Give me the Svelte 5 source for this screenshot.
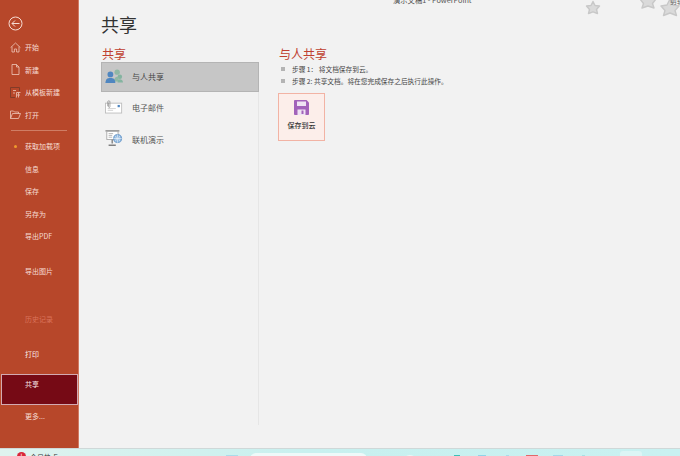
<script>
    const group1 = [
        {label: '开始', icon: 'home'},
        {label: '新建', icon: 'doc'},
        {label: '从模板新建', icon: 'tpl'},
        {label: '打开', icon: 'open'}
    ]
    const group2 = [
        {label: '获取加载项', dot: true},
        {label: '信息'},
        {label: '保存'},
        {label: '另存为'},
        {label: '导出PDF'}
    ]
    const taskDots = [
        {color: '#3cc0b8', width: 6, left: 454},
        {color: '#8fd4e8', width: 8, left: 478},
        {color: '#a8dcea', width: 3, left: 506},
        {color: '#e2686a', width: 12, left: 526},
        {color: '#a3d8e8', width: 10, left: 553},
        {color: '#a8e0e4', width: 3, left: 582}
    ]
</script>

<div class="window">
    <div class="body">
        <aside class="side">
            <button class="back" aria-label="返回">
                <svg width="15" height="15" viewBox="0 0 15 15" fill="none" stroke="#f6dcd3" stroke-width="1">
                    <circle cx="7.5" cy="7.5" r="6.5" />
                    <path d="M11.5 7.5H4M7 4.5L4 7.5L7 10.5" />
                </svg>
            </button>

            <nav class="group top">
                {#each group1 as item}
                    <div class="item">
                        <span class="ico">
                            {#if item.icon === 'home'}
                                <svg width="11" height="11" viewBox="0 0 11 11" fill="none" stroke="#efc8ba" stroke-width=".8">
                                    <path d="M.6 5.6L5.5 1L10.4 5.6M2 4.6V10H4.4V7H6.6V10H9V4.6" />
                                </svg>
                            {:else if item.icon === 'doc'}
                                <svg width="9" height="11" viewBox="0 0 9 11" fill="none" stroke="#efc8ba" stroke-width=".8">
                                    <path d="M1 .5H5.5L8 3V10.5H1ZM5.5 .5V3H8" />
                                </svg>
                            {:else if item.icon === 'tpl'}
                                <svg width="11" height="11" viewBox="0 0 11 11" fill="none" stroke="#7c3a28" stroke-width=".9">
                                    <path d="M.5 .5H9.5V4M.5 .5V10.5H5" />
                                    <path d="M3 3.5H6M3 6H5M6.5 5.5V10.5M6.5 5.5H10.5M6.5 8H10M8.5 5.5V10.5" stroke="#e6b8a8" />
                                </svg>
                            {:else}
                                <svg width="11" height="9" viewBox="0 0 11 9" fill="none" stroke="#efc8ba" stroke-width=".8">
                                    <path d="M.5 8.5V1H3.5L4.5 2H8.5V3.5M.5 8.5H8.5L10.5 3.5H2.5Z" />
                                </svg>
                            {/if}
                        </span>
                        <span>{item.label}</span>
                    </div>
                {/each}
            </nav>

            <div class="rule"></div>

            <nav class="group">
                {#each group2 as item}
                    <div class="item">
                        <span class="ico">{#if item.dot}<i class="dot"></i>{/if}</span>
                        <span>{item.label}</span>
                    </div>
                {/each}
            </nav>

            <div class="item export"><span class="ico"></span><span>导出图片</span></div>
            <div class="item history"><span class="ico"></span><span>历史记录</span></div>
            <div class="item print"><span class="ico"></span><span>打印</span></div>
            <div class="item current"><span class="ico"></span><span>共享</span></div>
            <div class="item more"><span class="ico"></span><span>更多...</span></div>
        </aside>

        <main class="main">
            <div class="doc-title">演示文稿1 - PowerPoint</div>

            <svg class="stars" width="100" height="24" viewBox="0 0 100 24" aria-hidden="true">
                <g fill="#dadada" stroke="#c8c8c8" stroke-width="1.4" stroke-linejoin="round">
                    <path d="M9 1.500L11 5.500L15.500 6L12.500 9.500L13.500 13.500L9 11.800L4.500 13.500L5.500 9.500L2.500 6L7 5.500Z" />
                    <path d="M64-8L67-2L72-1L68.500 3.500L70 8L64 6L58 8L59.500 3.500L56-1L61-2Z" />
                    <path d="M86-1L89 5L95 6L91 10.500L92.500 15.500L86 13L79.500 15.500L81 10.500L77 6L83 5Z" />
                </g>
            </svg>
            <div class="corner-text">剪辑</div>

            <h1>共享</h1>

            <div class="columns">
                <section class="left">
                    <h2>共享</h2>
                    <div class="list">
                        <div class="row selected">
                            <svg viewBox="0 0 20 16">
                                <circle cx="13.500" cy="3.500" r="3" fill="#8fb8a4" />
                                <circle cx="16.500" cy="8.500" r="2.500" fill="#84b4a0" />
                                <path d="M10 14C10 10 12 8.500 14 8.500S15 12 15 14Z" fill="#8fb8a4" />
                                <path d="M14 15C14 12.500 15 11.500 16.500 11.500S20 12.500 20 15Z" fill="#84b4a0" />
                                <circle cx="6" cy="6" r="3.200" fill="#4f86c0" />
                                <path d="M.5 15.500C.5 11.500 2.500 10 6 10S11.500 11.500 11.500 15.500Z" fill="#4f86c0" />
                            </svg>
                            <span>与人共享</span>
                        </div>
                        <div class="row">
                            <svg viewBox="0 0 20 16" fill="none">
                                <rect x=".5" y="3.500" width="18" height="11" fill="#fff" stroke="#bdbdbd" />
                                <rect x="14" y="5.500" width="2.500" height="2.500" fill="#4f86c0" />
                                <path d="M3 9.500H12M3 11.500H9" stroke="#cfcfcf" />
                                <path d="M3 7V2C3 .5 5.500 .5 5.500 2V7.500C5.500 8.500 4 8.500 4 7.500V3" stroke="#8a8a8a" stroke-width=".8" />
                            </svg>
                            <span>电子邮件</span>
                        </div>
                        <div class="row">
                            <svg viewBox="0 0 20 19" fill="none">
                                <path d="M.500 1H16" stroke="#707070" stroke-width="1.200" />
                                <rect x="2" y="1.500" width="12.500" height="9" fill="#fff" stroke="#a8a8a8" />
                                <path d="M4 4H9M4 6H8M4 8H8" stroke="#b0b0b0" />
                                <path d="M8 10.500V15M4 17H12" stroke="#808080" stroke-width="1.500" />
                                <circle cx="14" cy="9.500" r="4.500" fill="#8db6de" stroke="#4f86c0" stroke-width=".7" />
                                <path d="M9.500 9.500H18.500M14 5V14M11.500 6.500C13 8.500 13 10.500 11.500 12.500M16.500 6.500C15 8.500 15 10.500 16.500 12.500" stroke="#fff" stroke-width=".6" />
                            </svg>
                            <span>联机演示</span>
                        </div>
                    </div>
                </section>

                <section class="right">
                    <h2>与人共享</h2>
                    <ul class="steps">
                        <li>步骤 1： 将文档保存到云。</li>
                        <li>步骤 2: 共享文档。将在您完成保存之后执行此操作。</li>
                    </ul>
                    <button class="save">
                        <svg width="15" height="15" viewBox="0 0 15 15">
                            <path d="M0 1C0 .5.500 0 1 0H12.500L15 2.500V14C15 14.500 14.500 15 14 15H1C.5 15 0 14.500 0 14Z" fill="#a263ba" />
                            <rect x="3" y="1.500" width="9" height="4.500" fill="#efe4f3" />
                            <rect x="3.500" y="9.500" width="8" height="5.500" fill="#efe4f3" />
                            <rect x="7.500" y="10.500" width="2" height="3.500" fill="#a263ba" />
                        </svg>
                        <span>保存到云</span>
                    </button>
                </section>
            </div>
        </main>
    </div>

    <footer class="taskbar">
        <i class="alert">!</i>
        <span class="news">今日热点</span>
        <i class="mark"></i>
        <i class="search"></i>
        <i class="circle"></i>
        {#each taskDots as dot}
            <i class="task" style="left: {dot.left}px; width: {dot.width}px; background: {dot.color}"></i>
        {/each}
        <i class="tray"></i>
    </footer>
</div>

<style>
    :global(body) {
        margin: 0;
    }

    .window {
        width: 680px;
        height: 456px;
        overflow: hidden;
        display: flex;
        flex-direction: column;
        background: #f2f2f2;
        font-family: "Noto Sans CJK SC", "Noto Sans", sans-serif;
    }

    .body {
        flex: 1;
        min-height: 0;
        display: flex;
    }

    .side {
        width: 78px;
        border-right: 1px solid #cf7a62;
        background: #b7472a;
        color: #f6dcd3;
        font-size: 7px;
        padding-top: 16px;
        flex-shrink: 0;
    }

    .back {
        display: block;
        margin: 0 0 0 8px;
        padding: 0;
        border: 0;
        background: none;
        height: 15px;
    }

    .group.top {
        margin-top: 5px;
    }

    .item {
        height: 22.5px;
        display: flex;
        align-items: center;
    }

    .ico {
        width: 25px;
        flex-shrink: 0;
        display: flex;
        justify-content: center;
        padding-left: 6px;
        box-sizing: border-box;
    }

    .dot {
        width: 3px;
        height: 3px;
        margin-left: -1px;
        background: #ef9a2d;
        border-radius: 50%;
    }

    .rule {
        height: 1px;
        margin: 4px 11px;
        background: #cf7d65;
    }

    .export {
        margin-top: 12px;
    }

    .history {
        margin-top: 25.500px;
        color: #d9735a;
    }

    .print {
        margin-top: 12.500px;
        color: #fbeee9;
    }

    .current {
        width: 77px;
        height: 31px;
        margin: 8.500px 0 0 1px;
        box-sizing: border-box;
        border: 1px solid #d3aab2;
        background: #760a15;
        color: #f8e6e6;
        align-items: flex-start;
        padding-top: 4px;
    }

    .current .ico {
        width: 23px;
    }

    .more {
        margin-top: 0;
    }

    .main {
        flex: 1;
        position: relative;
        padding-left: 22px;
    }

    .doc-title {
        position: absolute;
        left: 314px;
        top: -5px;
        font-size: 7.300px;
        line-height: 10px;
        color: #555;
        white-space: nowrap;
    }

    .stars {
        position: absolute;
        left: 505px;
        top: 0;
    }

    .corner-text {
        position: absolute;
        right: -4px;
        top: -4px;
        font-size: 7px;
        line-height: 10px;
        color: #666;
    }

    h1 {
        margin: 0;
        padding-top: 12px;
        font-size: 18px;
        line-height: 24px;
        font-weight: 400;
        color: #333;
    }

    h2 {
        margin: 0;
        font-size: 12px;
        line-height: 16px;
        font-weight: 400;
        color: #bf3f30;
    }

    .columns {
        display: flex;
        margin-top: 10px;
    }

    .left {
        width: 158px;
    }

    .left h2 {
        padding-left: 1px;
    }

    .list {
        height: 363px;
        box-sizing: border-box;
        border-right: 1px solid #e6e6e6;
    }

    .row {
        height: 30px;
        display: flex;
        align-items: center;
        gap: 9px;
        padding-left: 4px;
        box-sizing: border-box;
        font-size: 8px;
        color: #555;
    }

    .row + .row + .row {
        margin-top: 2px;
    }

    .row svg {
        width: 18px;
        flex-shrink: 0;
    }

    .selected {
        width: 158px;
        background: #c6c6c6;
        border: 1px solid #b4b4b4;
        padding-left: 3px;
        padding-bottom: 2px;
        color: #444;
    }

    .right {
        margin-left: 20px;
    }

    .steps {
        list-style: none;
        margin: 0;
        padding: 1px 0 0;
        font-size: 6.700px;
        color: #444;
    }

    .steps li {
        height: 12px;
        line-height: 12px;
        display: flex;
        white-space: pre;
    }

    .steps li::before {
        content: "";
        width: 4px;
        height: 4px;
        margin: 4px 7px 0 2px;
        background: #b4b4b4;
    }

    .save {
        display: flex;
        flex-direction: column;
        align-items: center;
        width: 47px;
        height: 48px;
        margin: 6px 0 0 -1px;
        padding: 6px 0 0;
        box-sizing: border-box;
        border: 1px solid #f2b3a4;
        background: #fceeea;
        font-family: inherit;
        font-size: 7px;
        font-weight: 500;
        color: #333;
    }

    .save span {
        margin-top: 5px;
        line-height: 10px;
    }

    .taskbar {
        height: 7px;
        position: relative;
        overflow: hidden;
        flex-shrink: 0;
        border-top: 1px solid #cfd8d8;
        background: linear-gradient(90deg, #dff3ef 0, #c8f0ef 45%, #c9f1f1 100%);
    }

    .taskbar i {
        position: absolute;
        display: block;
    }

    .alert {
        left: 17px;
        top: 3px;
        width: 9px;
        height: 9px;
        border-radius: 50%;
        background: #d9263a;
        color: #fff;
        font-size: 7px;
        line-height: 9px;
        text-align: center;
        font-style: normal;
    }

    .news {
        position: absolute;
        left: 30px;
        top: 3px;
        font-size: 7px;
        line-height: 10px;
        color: #333;
    }

    .mark {
        left: 226px;
        top: 6px;
        width: 12px;
        height: 8px;
        background: #a9dcea;
    }

    .search {
        left: 250px;
        top: 4px;
        width: 117px;
        height: 14px;
        border-radius: 6px;
        background: #eef9f9;
    }

    .circle {
        left: 403px;
        top: 6px;
        width: 14px;
        height: 14px;
        border-radius: 50%;
        background: #e8f6f6;
    }

    .task {
        top: 6px;
        height: 8px;
    }

    .tray {
        left: 620px;
        top: 2px;
        width: 22px;
        height: 12px;
        border-radius: 3px;
        background: #dcf5f5;
    }
</style>
